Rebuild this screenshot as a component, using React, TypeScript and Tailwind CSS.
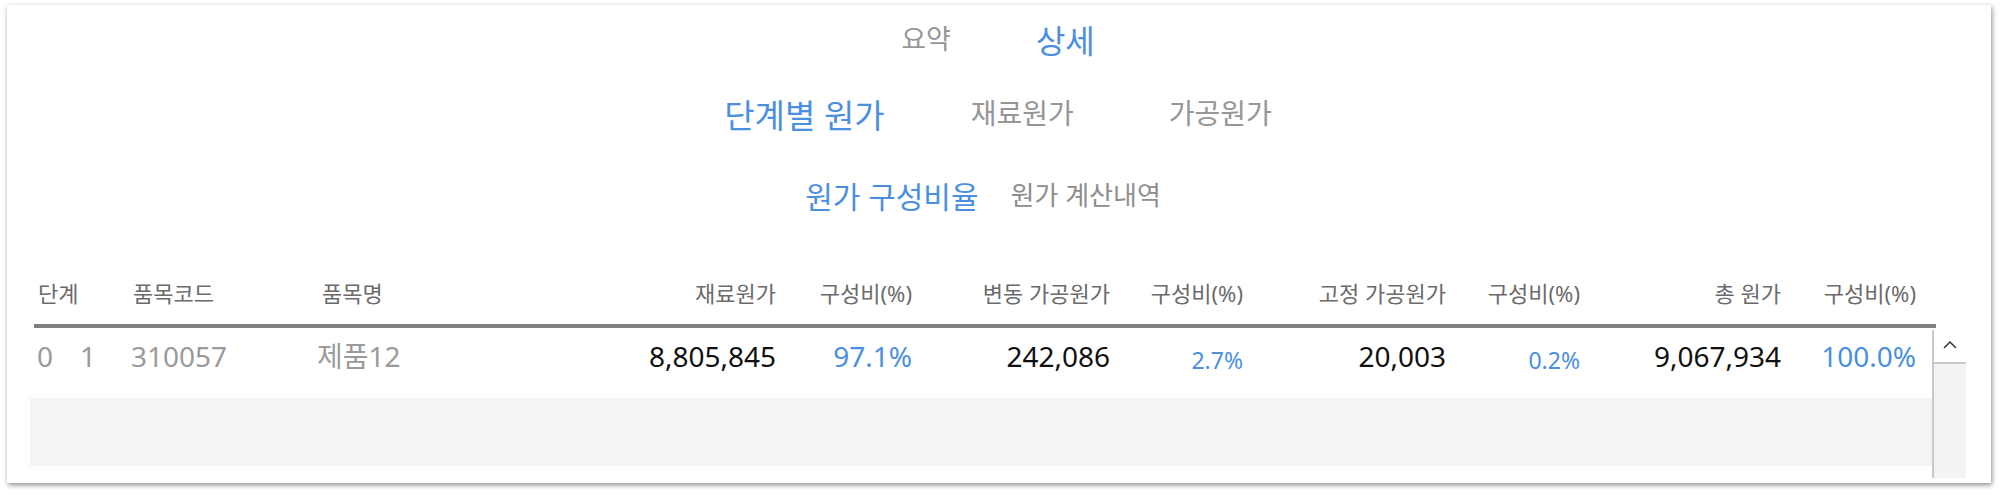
import React from "react";

const BLUE = "text-[#4a8fe0]";

function Caret() {
  return (
    <svg width="14" height="9" viewBox="0 0 14 9" fill="none">
      <polyline points="1,8 7,2 13,8" stroke="#333" strokeWidth="1.5" />
    </svg>
  );
}

const cols =
  "grid grid-cols-[86px_190px_250px_216px_136px_198px_133px_203px_134px_201px_135px]";

export default function App() {
  return (
    <div className="min-h-screen bg-white pt-[5px] font-['Noto_Sans','Noto_Sans_CJK_KR',sans-serif]">
      <div className="ml-[7px] w-[1984px] h-[478px] bg-white shadow-[1px_2px_5px_rgba(0,0,0,0.45)] flex flex-col pl-[23px] pr-[25px]">
        {/* tabs */}
        <div className="h-[209px] pt-[20px] flex flex-col leading-none">
          <div className="flex justify-center items-start gap-[85px] h-[30px]">
            <span className="text-[27px] text-[#969696]">요약</span>
            <span className={`text-[32px] ${BLUE}`}>상세</span>
          </div>
          <div className="flex justify-center items-start mt-[44px] h-[33px]">
            <span className={`text-[33px] ${BLUE}`}>단계별 원가</span>
            <span className="text-[28px] text-[#969696] ml-[86px]">재료원가</span>
            <span className="text-[28px] text-[#969696] ml-[95px]">가공원가</span>
          </div>
          <div className="flex justify-center items-start gap-[32px] mt-[50px] h-[30px] pr-[30px]">
            <span className={`text-[30px] ${BLUE}`}>원가 구성비율</span>
            <span className="text-[26px] text-[#8e8e8e]">원가 계산내역</span>
          </div>
        </div>

        {/* table header */}
        <div className={`${cols} ml-[4px] w-[1902px] h-[114px] pb-[20px] items-end border-b-4 border-[#808080] text-[22px] leading-none text-[#6b6b6b]`}>
          <div className="pl-[4px]">단계</div>
          <div className="pl-[13px]">품목코드</div>
          <div className="pl-[12px]">품목명</div>
          <div className="text-right">재료원가</div>
          <div className="text-right">구성비(%)</div>
          <div className="text-right">변동 가공원가</div>
          <div className="text-right">구성비(%)</div>
          <div className="text-right">고정 가공원가</div>
          <div className="text-right">구성비(%)</div>
          <div className="text-right">총 원가</div>
          <div className="text-right">구성비(%)</div>
        </div>

        {/* body */}
        <div className="flex">
          <div className="w-[1902px]">
            <div className={`${cols} pl-[4px] h-[70px] pt-[14px] items-start text-[28px] leading-none text-[#111]`}>
              <div className="flex text-[#9a9a9a] pl-[3px]">
                <span className="w-[43px]">0</span>
                <span>1</span>
              </div>
              <div className="pl-[11px] text-[#9a9a9a]">310057</div>
              <div className="pl-[7px] text-[#9a9a9a]">제품12</div>
              <div className="text-right">8,805,845</div>
              <div className={`text-right ${BLUE}`}>97.1%</div>
              <div className="text-right">242,086</div>
              <div className={`text-right text-[23px] pt-[7px] ${BLUE}`}>2.7%</div>
              <div className="text-right">20,003</div>
              <div className={`text-right text-[23px] pt-[7px] ${BLUE}`}>0.2%</div>
              <div className="text-right">9,067,934</div>
              <div className={`text-right ${BLUE}`}>100.0%</div>
            </div>
            <div className="h-[68px] bg-[#f4f4f4]" />
          </div>

          {/* scrollbar */}
          <div className="w-[34px] h-[148px] mt-[2px] border-l-2 border-[#c9c9c9] flex flex-col">
            <div className="h-[34px] border-b-2 border-[#c9c9c9] flex items-center justify-center pb-[3px]">
              <Caret />
            </div>
            <div className="flex-1 bg-[#f3f3f3]" />
          </div>
        </div>
      </div>
    </div>
  );
}
